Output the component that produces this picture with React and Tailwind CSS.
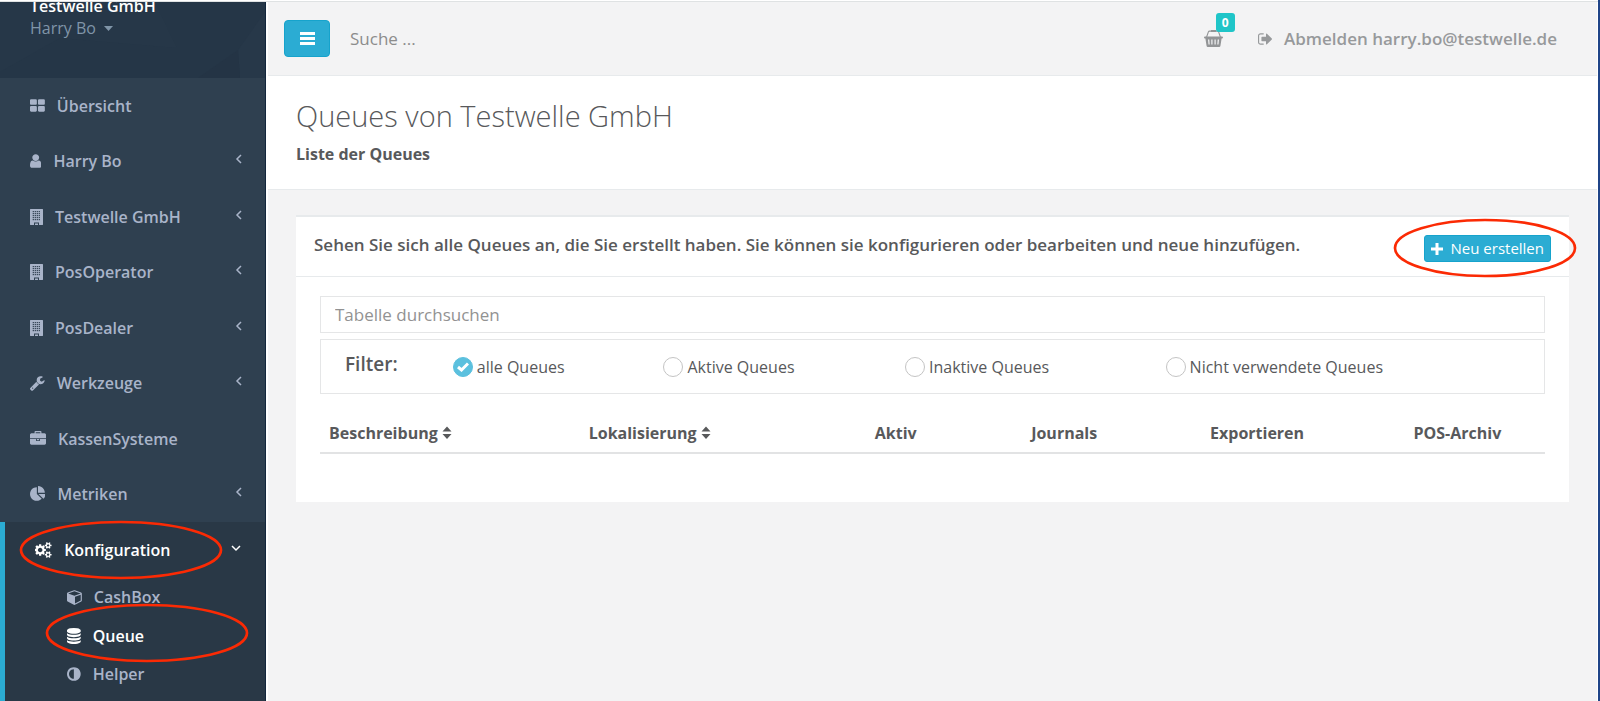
import React from "react";

const PATHS = {
  grid: "M832 1024v384q0 52-38 90t-90 38h-512q-52 0-90-38t-38-90v-384q0-52 38-90t90-38h512q52 0 90 38t38 90zm0-768v384q0 52-38 90t-90 38h-512q-52 0-90-38t-38-90v-384q0-52 38-90t90-38h512q52 0 90 38t38 90zm896 768v384q0 52-38 90t-90 38h-512q-52 0-90-38t-38-90v-384q0-52 38-90t90-38h512q52 0 90 38t38 90zm0-768v384q0 52-38 90t-90 38h-512q-52 0-90-38t-38-90v-384q0-52 38-90t90-38h512q52 0 90 38t38 90z",
  user: "M1536 1399q0 109-62.5 187t-150.5 78h-854q-88 0-150.5-78t-62.5-187q0-85 8.5-160.5t31.5-152 58.5-131 94-89 134.5-34.5q131 128 313 128t313-128q76 0 134.5 34.5t94 89 58.5 131 31.5 152 8.5 160.5zm-256-887q0 159-112.5 271.5t-271.5 112.5-271.5-112.5-112.5-271.5 112.5-271.5 271.5-112.5 271.5 112.5 112.5 271.5z",
  wrench: "M448 1472q0-26-19-45t-45-19-45 19-19 45 19 45 45 19 45-19 19-45zm644-420l-682 682q-37 37-90 37-52 0-91-37l-106-108q-38-36-38-90 0-53 38-91l681-681q39 98 114.5 173.5t173.5 114.5zm634-435q0 39-23 106-47 134-164.5 217.5t-258.5 83.5q-185 0-316.5-131.5t-131.5-316.5 131.5-316.5 316.5-131.5q58 0 121.5 16.5t107.5 46.5q16 11 16 28t-16 28l-293 169v224l193 107q5-3 79-48.5t135.5-81 70.5-35.5q15 0 23.5 10t8.5 25z",
  briefcase: "M640 256h512v-128h-512v128zm1152 640v480q0 66-47 113t-113 47h-1472q-66 0-113-47t-47-113v-480h672v160q0 26 19 45t45 19h320q26 0 45-19t19-45v-160h672zm-768 0v128h-256v-128h256zm768-480v384h-1792v-384q0-66 47-113t113-47h352v-160q0-40 28-68t68-28h576q40 0 68 28t28 68v160h352q66 0 113 47t47 113z",
  pie: "M768 890l546 546q-106 108-247.5 168t-298.5 60q-209 0-385.5-103t-279.5-279.5-103-385.5 103-385.5 279.5-279.5 385.5-103v762zm187 6h773q0 157-60 298.5t-168 247.5zm709-128h-768v-768q209 0 385.5 103t279.5 279.5 103 385.5z",
  cogs: "M832 896q0-106-75-181t-181-75-181 75-75 181 75 181 181 75 181-75 75-181zm768 512q0-52-38-90t-90-38-90 38-38 90q0 53 37.5 90.5t90.5 37.5 90.5-37.5 37.5-90.5zm0-1024q0-52-38-90t-90-38-90 38-38 90q0 53 37.5 90.5t90.5 37.5 90.5-37.5 37.5-90.5zm-384 421v185q0 10-7 19.5t-16 10.5l-155 24q-11 35-32 76 34 48 90 115 7 11 7 20 0 12-7 19-23 30-82.5 89.5t-78.5 59.5q-11 0-21-7l-115-90q-37 19-77 31-11 108-23 155-7 24-30 24h-186q-11 0-20-7.5t-10-17.5l-23-153q-34-10-75-31l-118 89q-7 7-20 7-11 0-21-8-144-133-144-160 0-9 7-19 10-14 41-53t47-61q-23-44-35-82l-152-24q-10-1-17-9.5t-7-19.5v-185q0-10 7-19.5t16-10.5l155-24q11-35 32-76-34-48-90-115-7-11-7-20 0-12 7-20 22-30 82-89t79-59q11 0 21 7l115 90q34-18 77-32 11-108 23-154 7-24 30-24h186q11 0 20 7.5t10 17.5l23 153q34 10 75 31l118-89q8-7 20-7 11 0 21 8 144 133 144 160 0 8-7 19-12 16-42 54t-45 60q23 48 34 82l152 23q10 2 17 10.5t7 19.5zm640 533v140q0 16-149 31-12 27-30 52 51 113 51 138 0 4-4 7-122 71-124 71-8 0-46-47t-52-68q-20 2-30 2t-30-2q-14 21-52 68t-46 47q-2 0-124-71-4-3-4-7 0-25 51-138-18-25-30-52-149-15-149-31v-140q0-16 149-31 13-29 30-52-51-113-51-138 0-4 4-7 4-2 35-20t59-34 30-16q8 0 46 46.5t52 67.5q20-2 30-2t30 2q51-71 92-112l6-2q4 0 124 70 4 3 4 7 0 25-51 138 17 23 30 52 149 15 149 31zm0-1024v140q0 16-149 31-12 27-30 52 51 113 51 138 0 4-4 7-122 71-124 71-8 0-46-47t-52-68q-20 2-30 2t-30-2q-14 21-52 68t-46 47q-2 0-124-71-4-3-4-7 0-25 51-138-18-25-30-52-149-15-149-31v-140q0-16 149-31 13-29 30-52-51-113-51-138 0-4 4-7 4-2 35-20t59-34 30-16q8 0 46 46.5t52 67.5q20-2 30-2t30 2q51-71 92-112l6-2q4 0 124 70 4 3 4 7 0 25-51 138 17 23 30 52 149 15 149 31z",
  cube: "M896 1629l640-349v-636l-640 233v752zm-64-865l698-254-698-254-698 254zm832-252v768q0 35-18 65t-49 47l-704 384q-28 16-61 16t-61-16l-704-384q-31-17-49-47t-18-65v-768q0-40 23-73t61-47l704-256q22-8 44-8t44 8l704 256q38 14 61 47t23 73z",
  database: "M896 768q237 0 443-43t325-127v170q0 69-103 128t-280 93.5-385 34.5-385-34.5-280-93.5-103-128v-170q119 84 325 127t443 43zm0 768q237 0 443-43t325-127v170q0 69-103 128t-280 93.5-385 34.5-385-34.5-280-93.5-103-128v-170q119 84 325 127t443 43zm0-384q237 0 443-43t325-127v170q0 69-103 128t-280 93.5-385 34.5-385-34.5-280-93.5-103-128v-170q119 84 325 127t443 43zm0-1152q208 0 385 34.5t280 93.5 103 128v128q0 69-103 128t-280 93.5-385 34.5-385-34.5-280-93.5-103-128v-128q0-69 103-128t280-93.5 385-34.5z",
  adjust: "M896 1440v-1088q-148 0-273 73t-198 198-73 273 73 273 198 198 273 73zm768-544q0 209-103 385.5t-279.5 279.5-385.5 103-385.5-103-279.5-279.5-103-385.5 103-385.5 279.5-279.5 385.5-103 385.5 103 279.5 279.5 103 385.5z",
  signOut: "M704 1440q0 4 1 20t.5 26.5-3 23.5-10 19.5-20.5 6.5h-320q-119 0-203.5-84.5t-84.5-203.5v-704q0-119 84.5-203.5t203.5-84.5h320q13 0 22.5 9.5t9.5 22.5q0 4 1 20t.5 26.5-3 23.5-10 19.5-20.5 6.5h-320q-66 0-113 47t-47 113v704q0 66 47 113t113 47h312l11.5 1 11.5 3 8 5.5 7 9 2 13.5zm928-544q0 26-19 45l-544 544q-19 19-45 19t-45-19-19-45v-288h-448q-26 0-45-19t-19-45v-384q0-26 19-45t45-19h448v-288q0-26 19-45t45-19 45 19l544 544q19 19 19 45z",
};

const VIEW = {
  grid: "64 0 1664 1792",
  user: "256 0 1280 1792",
  wrench: "85 0 1641 1792",
  briefcase: "0 0 1792 1792",
  pie: "0 0 1728 1792",
  cogs: "0 0 1920 1792",
  cube: "0 0 1664 1792",
  database: "128 0 1536 1792",
  adjust: "128 0 1536 1792",
  signOut: "64 0 1600 1792",
};

function Glyph({ name, className = "h-4" }) {
  return (
    <svg viewBox={VIEW[name]} className={`w-auto shrink-0 fill-current ${className}`} aria-hidden="true">
      <path d={PATHS[name]} />
    </svg>
  );
}

function Building() {
  const columns = [3.2, 5.2, 7.2, 9.2];
  const rows = [2, 4, 6, 8, 10];
  return (
    <svg viewBox="0 0 13 16" className="h-4 w-[13px] shrink-0" aria-hidden="true">
      <path className="fill-current" d="M.4 0h12.2q.4 0 .4.4v15.2q0 .4-.4.4H9V13.400H4V16H.4q-.4 0-.4-.4V.4Q0 0 .4 0z" />
      <path className="fill-current" d="M5 14.500h3V16H5z" />
      {rows.map((y) =>
        columns.map((x) => <rect key={`${x}-${y}`} x={x - 0.5} y={y} width="1.2" height="1.200" fill="#2f4050" />)
      )}
    </svg>
  );
}

function Basket() {
  return (
    <svg viewBox="0 0 19 17" className="h-[17px] w-[19px]" aria-hidden="true">
      <path d="M2.600 7 4.400 1.900Q4.700 1.100 5.600 1.100H7M16.400 7 14.600 1.900Q14.300 1.100 13.400 1.100H12" fill="none" stroke="currentColor" strokeWidth="1.100" />
      <path d="M7 0h5v2H7z" fill="currentColor" />
      <path
        fillRule="evenodd"
        fill="currentColor"
        d="M1 6.500h17q1 0 1 1t-1 1.100h-.4L16.400 16q-.2 1-1.200 1H3.800q-1 0-1.200-1L1.400 8.600H1q-1 0-1-1t1-1.100zM4 9.600l.5 5h1.200l-.4-5zM7.300 9.600v5h1.200v-5zM10.500 9.600v5h1.200v-5zM13.700 9.600l-.4 5h1.200l.5-5z"
      />
    </svg>
  );
}

function Chevron({ open }) {
  return (
    <svg viewBox="0 0 10 10" className={`mb-1 h-[10px] w-[10px] fill-none stroke-current ${open ? "-rotate-90" : ""}`} strokeWidth="1.5" aria-hidden="true">
      <path d="M7 1 3 5l4 4" />
    </svg>
  );
}

function SortIcon() {
  return (
    <svg viewBox="0 0 10 14" className="h-[14px] w-[10px] fill-current" aria-hidden="true">
      <path d="M5 .5 9.500 5.500H.5zM.5 8h9L5 13z" />
    </svg>
  );
}

function Marker({ className, w, h }) {
  return (
    <svg viewBox={`0 0 ${w} ${h}`} className={`pointer-events-none absolute z-10 ${className}`} aria-hidden="true">
      <ellipse cx={w / 2} cy={h / 2} rx={w / 2 - 2} ry={h / 2 - 2} fill="none" stroke="#fb2a04" strokeWidth="2.700" />
    </svg>
  );
}

const NAV = [
  { label: "Übersicht", icon: <Glyph name="grid" /> },
  { label: "Harry Bo", icon: <Glyph name="user" />, more: true },
  { label: "Testwelle GmbH", icon: <Building />, more: true },
  { label: "PosOperator", icon: <Building />, more: true },
  { label: "PosDealer", icon: <Building />, more: true },
  { label: "Werkzeuge", icon: <Glyph name="wrench" />, more: true },
  { label: "KassenSysteme", icon: <Glyph name="briefcase" /> },
  { label: "Metriken", icon: <Glyph name="pie" />, more: true },
];

function Sidebar() {
  return (
    <aside className="w-[266px] shrink-0 border-r border-[#12263c] bg-[#2f4050] font-semibold text-[#a9b4c9]">
      <div className="relative h-[76px] overflow-hidden bg-[#253647] pl-[30px]">
        <svg viewBox="0 0 265 76" preserveAspectRatio="none" className="absolute inset-0 h-full w-full" aria-hidden="true">
          <path d="M0 0h155l22 46L60 36 0 70z" fill="#263748" />
          <path d="M238 48 265 10v66h-25z" fill="#273849" />
          <path d="m238 48-40 28h42z" fill="#243445" />
        </svg>
        <div className="relative -mt-2">
          <div className="leading-6 text-white">Testwelle GmbH</div>
          <button type="button" className="flex items-center gap-2 leading-5 font-normal text-[#8095a8]">
            Harry Bo
            <svg viewBox="0 0 9 5" className="h-[5px] w-[9px] fill-current" aria-hidden="true">
              <path d="M0 0h9L4.500 5z" />
            </svg>
          </button>
        </div>
      </div>
      <nav>
        <ul className="grid h-[444px] auto-rows-fr">
          {NAV.map((item) => (
            <li key={item.label} className="flex">
              <a href="#" className="flex flex-1 items-center gap-3 pr-[21px] pl-[30px]">
                {item.icon}
                <span className="flex-1">{item.label}</span>
                {item.more && <Chevron />}
              </a>
            </li>
          ))}
        </ul>
        <div className="border-l-[5px] border-[#2bacd3] bg-[#293846] pb-2">
          <div className="relative">
            <a href="#" className="flex h-14 items-center gap-3 pr-6 pl-[30px] text-white">
              <Glyph name="cogs" />
              <span className="flex-1">Konfiguration</span>
              <Chevron open />
            </a>
            <Marker className="-top-[2px] left-[14px] h-[60px] w-[204px]" w={204} h={60} />
          </div>
          <ul>
            <li>
              <a href="#" className="flex h-[38px] items-center gap-3 pl-[62px]">
                <Glyph name="cube" />
                CashBox
              </a>
            </li>
            <li className="relative">
              <a href="#" className="flex h-[39px] items-center gap-3 pl-[62px] text-white">
                <Glyph name="database" />
                Queue
              </a>
              <Marker className="-top-[13px] left-10 h-[60px] w-[204px]" w={204} h={60} />
            </li>
            <li>
              <a href="#" className="flex h-[38px] items-center gap-3 pl-[62px]">
                <Glyph name="adjust" />
                Helper
              </a>
            </li>
          </ul>
        </div>
      </nav>
    </aside>
  );
}

const FILTERS = ["alle Queues", "Aktive Queues", "Inaktive Queues", "Nicht verwendete Queues"];

function FilterBar() {
  return (
    <div
      role="radiogroup"
      aria-labelledby="filter-title"
      className="mt-[6px] grid h-[55px] grid-cols-[132fr_211fr_242fr_261fr_379fr] items-center border border-[#e5e6e7]"
    >
      <span id="filter-title" className="pb-1 pl-6 text-[19px] font-semibold">Filter:</span>
      {FILTERS.map((label, i) => (
        <label key={label} className="flex items-center gap-1 whitespace-nowrap">
          <span className="grid place-items-center">
            <input
              type="radio"
              name="filter"
              defaultChecked={i === 0}
              className="peer col-start-1 row-start-1 h-5 w-5 appearance-none rounded-full border border-[#c4c4c4] bg-white checked:border-[#5bc0de] checked:bg-[#5bc0de]"
            />
            <svg viewBox="0 0 12 10" className="invisible col-start-1 row-start-1 h-[10px] w-3 fill-none stroke-white peer-checked:visible" strokeWidth="3" aria-hidden="true">
              <path d="m1 5 3.500 3L11 1.500" />
            </svg>
          </span>
          {label}
        </label>
      ))}
    </div>
  );
}

export default function App() {
  return (
    <div className="flex min-h-screen flex-col border-r-2 border-[#1f4488] bg-[#f3f3f4] font-['Open_Sans',sans-serif] text-base text-[#58595b]">
      <div className="h-[2px] border-b border-[#dfe2e3] bg-white" />
      <div className="flex flex-1">
        <Sidebar />
        <main className="min-w-0 flex-1 border-r border-l-2 border-white">
          <header className="flex h-[74px] items-center border-b border-[#e7eaec] pr-10 pl-4">
            <button type="button" aria-label="Menü" className="grid h-[37px] w-[46px] place-items-center rounded border border-[#16a3cc] bg-[#2bacd3] text-white">
              <svg viewBox="0 0 15 13" className="h-[13px] w-[15px] fill-current" aria-hidden="true">
                <path d="M0 0h15v3H0zM0 5h15v3H0zM0 10h15v3H0z" />
              </svg>
            </button>
            <input
              type="text"
              aria-label="Suche"
              placeholder="Suche ..."
              className="ml-5 h-9 min-w-0 flex-1 bg-transparent text-[17px] outline-none placeholder:text-[#8c8c8c]"
            />
            <a href="#" aria-label="Warenkorb" className="relative mr-[35px] text-[#929496]">
              <Basket />
              <span className="absolute -top-[17px] left-3 rounded-[3px] bg-[#1fc5c8] px-[6px] text-xs leading-[19px] font-bold text-white">0</span>
            </a>
            <a href="#" className="flex items-center gap-3 text-[17px] font-semibold text-[#97999b]">
              <Glyph name="signOut" />
              Abmelden harry.bo@testwelle.de
            </a>
          </header>

          <section className="h-[114px] border-b border-[#e7eaec] bg-white px-7 pt-5">
            <h1 className="text-[29px] leading-10 font-light">Queues von Testwelle GmbH</h1>
            <p className="mt-[6px] leading-6 font-bold">Liste der Queues</p>
          </section>

          <section className="mx-7 mt-[25px] border-t-2 border-[#e7eaec] bg-white">
            <div className="relative flex h-[60px] items-center justify-between border-b border-[#e7eaec] px-[18px]">
              <h2 className="pb-1 text-[17px] font-semibold">
                Sehen Sie sich alle Queues an, die Sie erstellt haben. Sie können sie konfigurieren oder bearbeiten und neue hinzufügen.
              </h2>
              <button type="button" className="mt-1 flex h-[27px] items-center gap-2 rounded-[3px] border border-[#16a3cc] bg-[#2bacd3] px-[6px] text-[15px] text-white">
                <svg viewBox="0 0 12 12" className="h-3 w-3 fill-current" aria-hidden="true">
                  <path d="M4.500 0h3v4.500H12v3H7.500V12h-3V7.500H0v-3h4.500z" />
                </svg>
                Neu erstellen
              </button>
              <Marker className="top-[1px] -right-2 h-[60px] w-[184px]" w={184} h={60} />
            </div>
            <div className="px-6 pt-[19px] pb-12">
              <input
                type="text"
                aria-label="Tabelle durchsuchen"
                placeholder="Tabelle durchsuchen"
                className="block h-[37px] w-full border border-[#e5e6e7] px-[14px] text-[17px] outline-none placeholder:text-[#929292]"
              />
              <FilterBar />
              <table className="mt-[19px] w-full table-fixed border-b-2 border-[#e2e3e4] font-bold">
                <colgroup>
                  <col className="w-[21.2%]" />
                  <col className="w-[18.6%]" />
                  <col className="w-[14.4%]" />
                  <col className="w-[13.1%]" />
                  <col className="w-[18.4%]" />
                  <col className="w-[14.3%]" />
                </colgroup>
                <thead>
                  <tr className="h-10">
                    {["Beschreibung", "Lokalisierung"].map((title) => (
                      <th key={title} scope="col" className="px-[9px] text-left">
                        <button type="button" className="flex items-center gap-1 font-bold">
                          {title}
                          <SortIcon />
                        </button>
                      </th>
                    ))}
                    {["Aktiv", "Journals", "Exportieren", "POS-Archiv"].map((title) => (
                      <th key={title} scope="col">{title}</th>
                    ))}
                  </tr>
                </thead>
                <tbody />
              </table>
            </div>
          </section>
        </main>
      </div>
    </div>
  );
}
